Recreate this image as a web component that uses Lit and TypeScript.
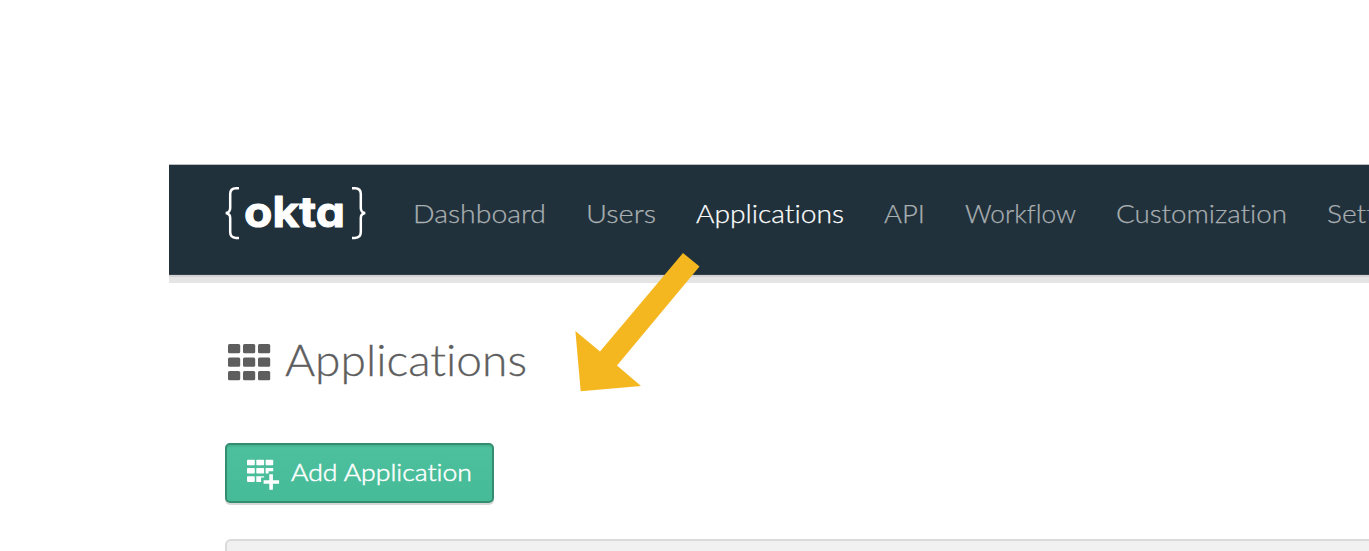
import { LitElement, html, svg, css } from "lit";
import { customElement, property } from "lit/decorators.js";

/** A line of text fitted to an exact advance width. */
@customElement("fit-label")
class FitLabel extends LitElement {
  @property() text = "";
  @property({ type: Number }) width = 0;
  @property({ type: Number }) size = 26;

  static styles = css`
    :host { display: block; flex: none; }
    svg { display: block; overflow: visible; }
    text {
      fill: currentColor; stroke: currentColor; stroke-width: var(--label-stroke, 0);
      font-family: Lato, "Open Sans", sans-serif; font-weight: inherit;
      font-variant-ligatures: none;
    }
  `;

  render() {
    const h = Math.round(this.size * 1.2);
    return html`<svg width=${this.width} height=${h}>
      <text x="0" y=${this.size} font-size=${this.size} textLength=${this.width} lengthAdjust="spacingAndGlyphs">${this.text}</text>
    </svg>`;
  }
}

const NAV = [
  { text: "Dashboard", width: 133 },
  { text: "Users", width: 70 },
  { text: "Applications", width: 148, active: true },
  { text: "API", width: 41 },
  { text: "Workflow", width: 111 },
  { text: "Customization", width: 171 },
  { text: "Settings", width: 97 },
];

@customElement("app-root")
class AppRoot extends LitElement {
  static styles = css`
    :host {
      display: block; position: relative; box-sizing: border-box;
      width: 1369px; height: 551px; padding: 165px 0 0 169px;
      overflow: hidden; background: #fff;
      font-family: Lato, "Open Sans", sans-serif;
    }
    svg { display: block; flex: none; }
    header {
      display: flex; align-items: flex-start; box-sizing: border-box;
      height: 110px; padding: 21px 0 0 55px; background: #21313b;
      box-shadow: 0 -1px 0 #b9bfc3, inset 0 -1px 0 #34414a;
      overflow: hidden;
    }
    .edge { height: 8px; background: #e5e5e5; border-top: 2px solid #d3d3d3; box-sizing: border-box; }
    nav { display: flex; gap: 40px; padding: 11px 0 0 45px; font-weight: 300; color: #a9afb2; --label-stroke: 0.25px; }
    .active { color: #fff; }
    .wordmark {
      font: 700 42px Inter, sans-serif; font-feature-settings: "cv11" 1;
      fill: #fff; stroke: #fff; stroke-width: 1; stroke-linejoin: round;
    }
    .title {
      display: flex; align-items: flex-start; padding: 50px 0 0 59px; height: 110px;
      color: #5e5e5e; font-weight: 300; --label-stroke: 0.3px;
    }
    .title svg { margin: 11px 14px 0 0; }
    button {
      display: flex; align-items: flex-start; box-sizing: border-box;
      width: 269px; height: 60px; margin: 0 0 0 56px; padding: 12px 0 0 20px;
      border: 2px solid #358d70; border-radius: 5px; color: #fff;
      background: linear-gradient(#4dc09d, #46bb97);
      box-shadow: 0 2px 0 #d8d8d8, inset 0 2px 0 #48b592;
      font-weight: 300; --label-stroke: 0.5px;
    }
    button svg { margin: 2px 11px 0 0; }
    .panel { height: 40px; margin: 36px 0 0 56px; width: 1300px; box-sizing: border-box; border: 2px solid #dadada; border-radius: 6px; background: #f1f1f1; }
    .arrow { position: absolute; left: 560px; top: 240px; }
  `;

  render() {
    return html`
      <header>
        <svg width="144" height="56" viewBox="224 186 144 56">
          <g fill="none" stroke="#fff" stroke-width="2.5">
            <path d="M239 188.3h-3q-5.8 0-5.8 5.8v14q0 4.5-4.4 5q4.4.7 4.4 5v14q0 5.8 5.8 5.8h3" />
            <path d="M352 188.3h3q5.8 0 5.8 5.8v14q0 4.5 4.4 5q-4.4.7-4.4 5v14q0 5.8-5.8 5.8h-3" />
          </g>
          <text class="wordmark" x="244" y="227" textLength="101" lengthAdjust="spacingAndGlyphs">okta</text>
        </svg>
        <nav>
          ${NAV.map((n) => html`<fit-label class=${n.active ? "active" : ""} text=${n.text} width=${n.width} size="26"></fit-label>`)}
        </nav>
      </header>
      <div class="edge"></div>
      <main>
        <div class="title">
          <svg width="43" height="37" fill="#5e5e5e">
            ${[0, 13.5, 27].map((y) => [0, 15, 30].map((x) => svg`<rect x=${x} y=${y} width="12.2" height="9.3" rx="1.5" />`))}
          </svg>
          <fit-label text="Applications" width="242" size="43"></fit-label>
        </div>
        <button>
          <svg width="33" height="31" fill="#fff">
            <rect x="0" y="0.7" width="7.8" height="5.6" rx="0.8" /><rect x="9.3" y="0.7" width="7.8" height="5.6" rx="0.8" /><rect x="18.6" y="0.7" width="7.6" height="5.6" rx="0.8" />
            <rect x="0" y="9" width="7.8" height="5.6" rx="0.8" /><rect x="9.3" y="9" width="7.8" height="5.6" rx="0.8" />
            <path d="M18.6 9h7.6v3.2h-4.6v2.4h-3z" />
            <rect x="0" y="17.3" width="7.8" height="5.6" rx="0.8" /><path d="M9.3 17.3h7.8v1.3h-3v4.3h-4.8z" />
            <path d="M22.3 15.3h3.6v6h6.2v3.5h-6.2v6h-3.6v-6h-5.7v-3.5h5.7z" />
          </svg>
          <fit-label text="Add Application" width="181" size="24"></fit-label>
        </button>
        <div class="panel"></div>
      </main>
      <svg class="arrow" width="160" height="160"><path fill="#f4b720" d="M123 13l16.5 13.5L57 125.5 81 146 20.7 151.3 15.4 91 40 111.5z" /></svg>
    `;
  }
}
